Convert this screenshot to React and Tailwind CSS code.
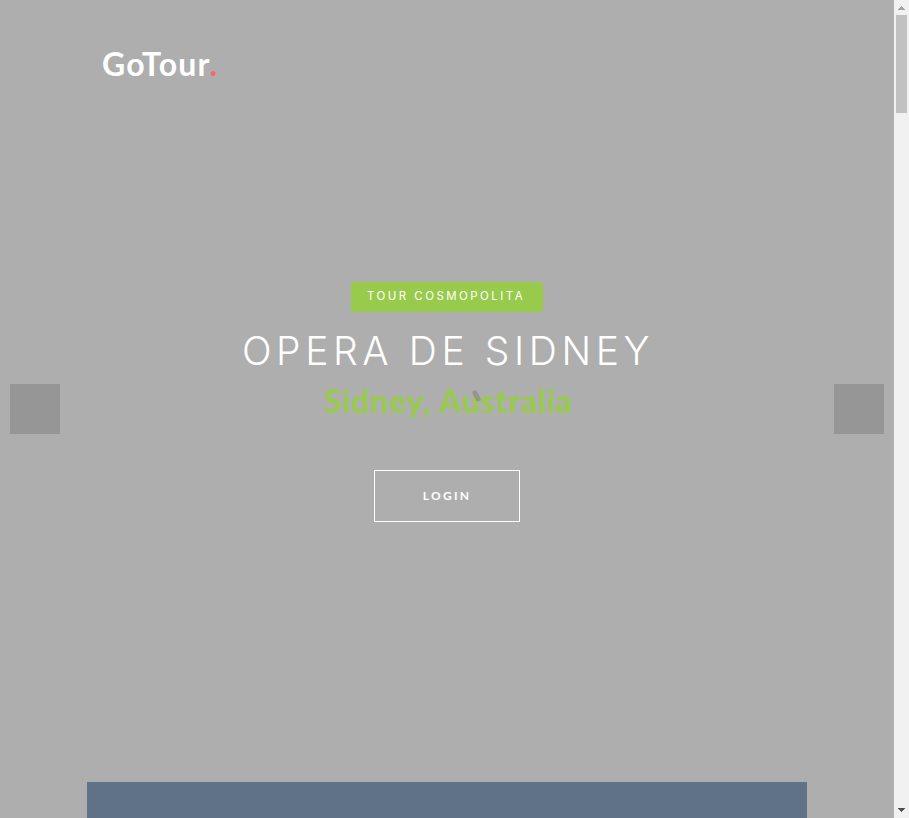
function Scrollbar() {
  return (
    <div className="flex w-[15px] shrink-0 flex-col items-center bg-[#f1f1f1]">
      <svg className="h-[15px] w-[15px] shrink-0" viewBox="0 0 15 15" shapeRendering="crispEdges">
        <path d="M7 6h1v1h1v1h1v1h1v1H4V9h1V8h1V7h1z" fill="#a3a3a3" />
      </svg>
      <div className="h-[98px] w-[11px] shrink-0 bg-[#c1c1c1]" />
      <div className="flex-1" />
      <svg className="h-[15px] w-[15px] shrink-0" viewBox="0 0 15 15" shapeRendering="crispEdges">
        <path d="M4 5h7v1h-1v1H9v1H8v1H7V8H6V7H5V6H4z" fill="#505050" />
      </svg>
    </div>
  );
}

export default function App() {
  return (
    <div className="flex h-[818px] w-[909px] overflow-hidden bg-[#aeaeae] font-['Lato',sans-serif]">
      <main className="flex min-w-0 flex-1 flex-col">
        <header className="h-[282px] pl-[102px] pt-[40px]">
          <a className="block whitespace-nowrap text-[32px] font-bold leading-[48px] tracking-[1.25px] text-white">
            GoTour<span className="text-[#f9676b]">.</span>
          </a>
        </header>
        <section className="flex h-[500px] justify-between px-[10px]">
          <button aria-label="Previous" className="mt-[102px] h-[50px] w-[50px] bg-[#969696]" />
          <div className="flex flex-col items-center whitespace-nowrap">
            <span className="h-[30px] w-[192px] rounded-[3px] bg-[#98ca4c] pl-[16px] text-left font-['Inter',sans-serif] text-[11.5px] font-normal leading-[29px] tracking-[2.45px] text-white">
              TOUR COSMOPOLITA
            </span>
            <h1 className="mt-[14px] h-[50px] pl-[2px] font-['Inter',sans-serif] text-[39px] font-light leading-[50px] tracking-[4.6px] text-white">
              OPERA DE SIDNEY
            </h1>
            <div className="relative h-[48px] pl-[3px]">
              <h2 className="text-[32px] font-bold leading-[50px] tracking-[0.85px] text-[#98ca4c]">
                Sidney, Australia
              </h2>
              <svg className="absolute left-[149px] top-[12px] h-[16px] w-[14px]" viewBox="0 0 14 16">
                <path d="M5 4.8L8 11" stroke="#555555" strokeOpacity="0.28" strokeWidth="5" strokeLinecap="round" />
              </svg>
            </div>
            <button className="mt-[46px] h-[52px] w-[146px] border border-white text-[12px] font-bold tracking-[2.3px] text-white">
              LOGIN
            </button>
          </div>
          <button aria-label="Next" className="mt-[102px] h-[50px] w-[50px] bg-[#969696]" />
        </section>
        <div className="mx-[87px] h-[36px] bg-[#607288]" />
      </main>
      <Scrollbar />
    </div>
  );
}
